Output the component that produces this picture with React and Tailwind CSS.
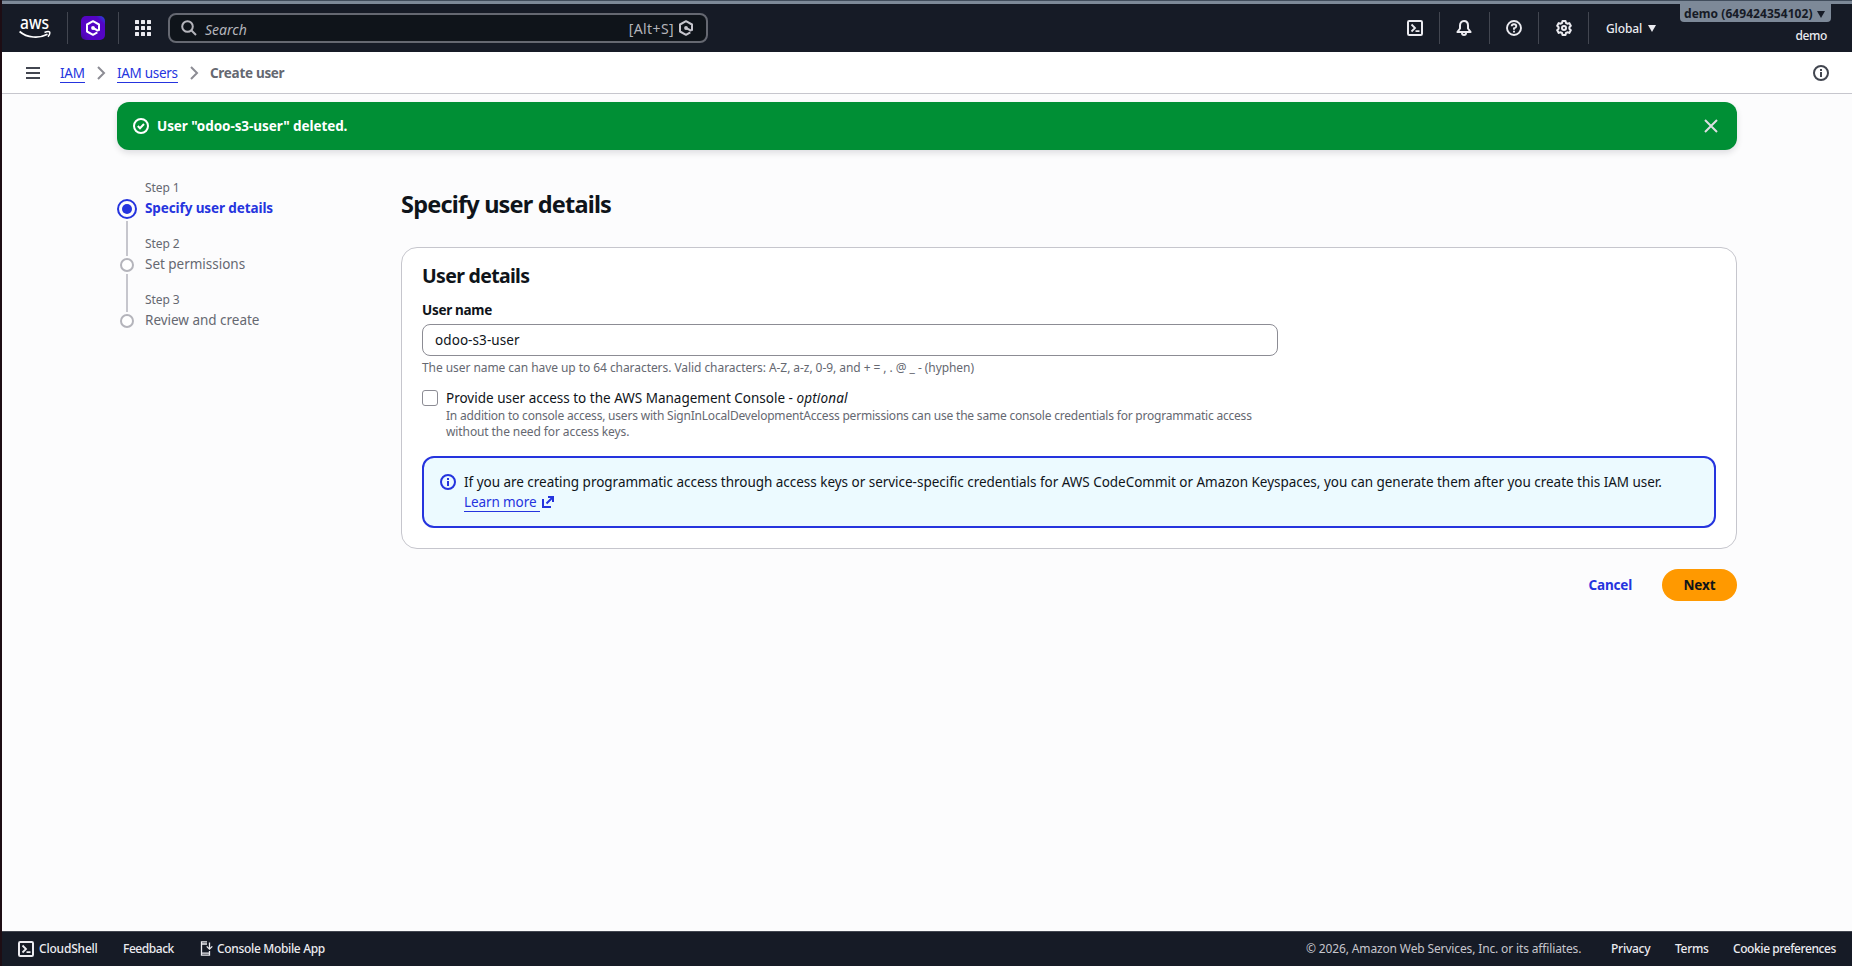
import React, { useState } from "react";

function CloudShellIcon() {
  return (
    <svg width="16" height="16" viewBox="0 0 16 16" fill="none" stroke="currentColor" strokeWidth="2" className="shrink-0">
      <rect x="1" y="1" width="14" height="14" rx="1.2" strokeLinejoin="round" />
      <path d="M4.5 4.5 8 8l-3.5 3.5M8.5 11.2h4" strokeWidth="1.8" />
    </svg>
  );
}

function BellIcon() {
  return (
    <svg width="16" height="16" viewBox="0 0 16 16" fill="none" stroke="currentColor" strokeWidth="2" strokeLinejoin="round">
      <path d="M8 1C5.4 1 4 3 4 5.5V8.5L1.4 12H14.6L12 8.5V5.5C12 3 10.6 1 8 1Z" />
      <path d="M6 13a2 2 0 0 0 4 0" />
    </svg>
  );
}

function HelpIcon() {
  return (
    <svg width="16" height="16" viewBox="0 0 16 16" fill="none" stroke="currentColor" strokeWidth="1.9">
      <circle cx="8" cy="8" r="7" />
      <path d="M5.7 6.3C5.7 5 6.7 4.2 8 4.2s2.3.8 2.3 2S9 8 8 8.3V9.8" />
      <path d="M8 10.8v1.8" />
    </svg>
  );
}

function GearIcon() {
  return (
    <svg width="16" height="16" viewBox="0 0 16 16" fill="none" stroke="currentColor" strokeWidth="2" strokeLinejoin="round">
      <path d="M6.5 1h3l.5 2 1.3.7 2-.6 1.5 2.6L13.4 7.2v1.6l1.4 1.5-1.5 2.6-2-.6L10 13l-.5 2h-3L6 13l-1.3-.7-2 .6-1.5-2.6 1.4-1.5V7.2L1.2 5.7l1.5-2.6 2 .6L6 3z" />
      <circle cx="8" cy="8" r="2" />
    </svg>
  );
}

function InfoIcon({ className = "" }) {
  return (
    <svg width="16" height="16" viewBox="0 0 16 16" fill="none" stroke="currentColor" strokeWidth="2" className={className}>
      <circle cx="8" cy="8" r="7" />
      <path d="M8 7v5M8 4v2" />
    </svg>
  );
}

function HexIcon({ className = "" }) {
  return (
    <svg width="16" height="16" viewBox="0 0 16 16" fill="none" stroke="currentColor" strokeWidth="2" className={className}>
      <path d="M14 10.8V4.5L8 1.2 2 4.5v7L8 14.8l4.3-2.4" strokeLinejoin="round" />
      <path d="M8 8l5.5 2.8" />
      <circle cx="8" cy="8" r="1.9" fill="currentColor" stroke="none" />
    </svg>
  );
}

function AwsLogo() {
  return (
    <svg width="32" height="42" viewBox="0 -11 32 42" className="shrink-0">
      <text x="1" y="11" fontFamily="Noto Sans" fontSize="18" fontWeight="500" fill="#fff" textLength="29" lengthAdjust="spacingAndGlyphs">
        aws
      </text>
      <path d="M0.6 13.5C8 20 20 20.8 28.5 16.3" fill="none" stroke="#fff" strokeWidth="1.7" />
      <path d="M25.5 14.5c2.5-1 4.5-1 5.2-.4.3 1-.4 3.2-1.7 4.6" fill="none" stroke="#fff" strokeWidth="1.5" />
    </svg>
  );
}

const Divider = () => <div className="h-8 w-px bg-[#424650]" />;

function Header() {
  return (
    <header className="flex h-12 items-center bg-[#161b26] text-[#ebebf0]">
      <div className="flex h-12 w-[65px] items-center pl-[17px]">
        <AwsLogo />
      </div>
      <Divider />
      <div className="flex w-[50px] justify-center">
        <div className="flex h-6 w-6 items-center justify-center rounded-[5px] bg-[linear-gradient(45deg,#3d0a8f_0%,#5603c4_20%,#5305c4_80%,#1d52e0_100%)] text-white">
          <HexIcon />
        </div>
      </div>
      <Divider />
      <div className="flex w-[49px] items-center pl-4">
        <svg width="16" height="16" viewBox="0 0 16 16" fill="currentColor">
          {[0, 6, 12].map((y) =>
            [0, 6, 12].map((x) => <rect key={`${x}-${y}`} x={x} y={y} width="4" height="4" rx="0.5" />)
          )}
        </svg>
      </div>
      <div className="flex h-[30px] w-[540px] items-center rounded-lg border-2 border-[#656871] bg-[#0f141a] pl-[11px] pr-3 text-[#b4b4bb]">
        <svg width="16" height="16" viewBox="0 0 16 16" fill="none" stroke="currentColor" strokeWidth="2">
          <circle cx="6.5" cy="6.5" r="5.3" />
          <path d="M10.5 10.5 15 15" />
        </svg>
        <span className="ml-2 pt-[2px] text-[14px] italic">Search</span>
        <span className="ml-auto mr-1 text-[14px] tracking-[0.4px]">[Alt+S]</span>
        <HexIcon className="text-[#c6c6cd]" />
      </div>

      <div className="ml-auto flex h-12 items-center">
        <div className="flex w-8"><CloudShellIcon /></div>
        <Divider />
        <div className="flex w-[49px] pl-4"><BellIcon /></div>
        <Divider />
        <div className="flex w-12 justify-center"><HelpIcon /></div>
        <Divider />
        <div className="flex w-[49px] justify-center"><GearIcon /></div>
        <Divider />
        <div className="flex w-[91px] items-center pl-[17px] text-[12px] font-medium">
          <span className="pt-px tracking-[-0.1px]">Global</span>
          <svg width="8" height="7" viewBox="0 0 8 7" fill="currentColor" className="ml-[6px]">
            <path d="M0 0h8L4 7z" />
          </svg>
        </div>
        <div className="flex h-12 w-[172px] flex-col items-end pr-[21px]">
          <div className="flex h-[18px] w-[151px] items-center rounded-b bg-[#7d8998] pl-1 pt-[2px] text-[12px] font-bold text-[#161b26]">
            <span className="whitespace-nowrap tracking-[0.05px]">demo (649424354102)</span>
            <svg width="8" height="7" viewBox="0 0 8 7" fill="currentColor" className="ml-1">
              <path d="M0 0h8L4 7z" />
            </svg>
          </div>
          <span className="mr-1 mt-[6px] text-[12px] font-medium leading-4 tracking-[-0.4px]">demo</span>
        </div>
      </div>
    </header>
  );
}

const Chevron = () => (
  <svg width="9" height="14" viewBox="0 0 9 14" fill="none" stroke="#8c8c94" strokeWidth="2">
    <path d="M1 1l6 6-6 6" />
  </svg>
);

function Breadcrumbs() {
  return (
    <nav className="flex h-[42px] items-center border-b border-[#c6c6cd] bg-white pl-6 pr-[23px] text-[13.5px]">
      <svg width="14" height="12" viewBox="0 0 14 12" stroke="#424650" strokeWidth="2">
        <path d="M0 1h14M0 6h14M0 11h14" />
      </svg>
      <a href="#" className="ml-5 mt-[2px] w-[25px] whitespace-nowrap border-b border-[#2534de] leading-[17px] tracking-[-0.25px] text-[#2534de]">IAM</a>
      <div className="ml-3 w-5"><Chevron /></div>
      <a href="#" className="mt-[2px] w-[61px] whitespace-nowrap border-b border-[#2534de] leading-[17px] tracking-[-0.3px] text-[#2534de]">IAM users</a>
      <div className="ml-3 w-5"><Chevron /></div>
      <span className="pt-px font-bold leading-5 tracking-[-0.3px] text-[#656871]">Create user</span>
      <InfoIcon className="ml-auto text-[#424650]" />
    </nav>
  );
}

const steps = [
  { label: "Step 1", title: "Specify user details", active: true },
  { label: "Step 2", title: "Set permissions" },
  { label: "Step 3", title: "Review and create" },
];

function Steps() {
  return (
    <ol className="w-[284px] pt-[30px]">
      {steps.map((step, i) => (
        <li key={step.label} className="flex h-14">
          <div className="flex w-5 flex-col items-center">
            {step.active ? (
              <div className="mt-[19px] flex h-5 w-5 shrink-0 items-center justify-center rounded-full border-2 border-[#2534de]">
                <div className="h-[10px] w-[10px] rounded-full bg-[#2534de]" />
              </div>
            ) : (
              <div className="mt-[22px] h-[14px] w-[14px] shrink-0 rounded-full border-2 border-[#b4b4bb] bg-white" />
            )}
            {i < steps.length - 1 && <div className="-mb-5 mt-[2px] w-[2px] flex-1 bg-[#c6c6cd]" />}
          </div>
          <div className="flex flex-col pl-2">
            <span className="text-[12px] leading-4 tracking-[-0.1px] text-[#656871]">{step.label}</span>
            <span
              className={`mt-[2px] text-[13.5px] leading-5 ${
                step.active ? "font-bold tracking-[-0.1px] text-[#2534de]" : "tracking-[-0.02px] text-[#656871]"
              }`}
            >
              {step.title}
            </span>
          </div>
        </li>
      ))}
    </ol>
  );
}

function UserDetails() {
  const [userName, setUserName] = useState("odoo-s3-user");

  return (
    <section className="h-[302px] rounded-2xl border border-[#c6c6cd] bg-white px-5 pt-4">
      <h2 className="text-[19.5px] font-bold leading-6 tracking-[-0.68px]">User details</h2>
      <label htmlFor="username" className="mt-3 block text-[13.5px] font-bold leading-5 tracking-[-0.3px]">
        User name
      </label>
      <input
        id="username"
        value={userName}
        onChange={(e) => setUserName(e.target.value)}
        className="mt-1 block h-8 w-[856px] rounded-lg border border-[#8c8c94] bg-white px-3 text-[13.5px] tracking-[0.08px] outline-none"
      />
      <p className="mt-1 text-[12px] leading-4 tracking-[-0.062px] text-[#656871]">
        The user name can have up to 64 characters. Valid characters: A-Z, a-z, 0-9, and + = , . @ _ - (hyphen)
      </p>

      {/* Console access */}
      <div className="mt-3 flex">
        <div className="mt-[2px] h-4 w-4 rounded-[3px] border border-[#8c8c94] bg-white" />
        <div className="pl-2">
          <p className="text-[13.5px] leading-5">
            Provide user access to the AWS Management Console - <i className="tracking-[0.15px]">optional</i>
          </p>
          <p className="text-[12px] leading-4 tracking-[-0.203px] text-[#656871]">
            In addition to console access, users with SignInLocalDevelopmentAccess permissions can use the same console credentials for programmatic access
            <br />
            <span className="tracking-[-0.1px]">without the need for access keys.</span>
          </p>
        </div>
      </div>

      <div className="mt-4 flex h-[72px] w-[1294px] rounded-xl border-2 border-[#2534de] bg-[#ecfaff] pl-4 pt-[14px]">
        <InfoIcon className="mt-[2px] text-[#2534de]" />
        <div className="pl-2 text-[13.5px] leading-5">
          <p className="whitespace-nowrap tracking-[-0.025px]">
            If you are creating programmatic access through access keys or service-specific credentials for AWS CodeCommit or Amazon Keyspaces, you can generate them after you create this IAM user.
          </p>
          <a href="#" className="flex text-[#2534de]">
            <span className="h-5 w-[76px] border-b border-[#2534de] tracking-[-0.1px]">Learn more</span>
            <svg width="12" height="12" viewBox="0 0 12 12" fill="none" stroke="currentColor" strokeWidth="2" className="ml-[2px] mt-[4px]">
              <path d="M1 3v8h8M6 1h5v5M11 1 4.5 7.5" />
            </svg>
          </a>
        </div>
      </div>
    </section>
  );
}

function Footer() {
  return (
    <footer className="flex h-[35px] items-center border-t border-[#424650] bg-[#161b26] pl-4 pr-[15px] text-[12px] font-medium text-[#ebebf0]">
      <CloudShellIcon />
      <span className="ml-[5px] w-[84px] tracking-[-0.2px]">CloudShell</span>
      <span className="w-[77px] tracking-[-0.45px]">Feedback</span>
      <svg width="13" height="15" viewBox="0 0 13 15" fill="none" stroke="currentColor" strokeWidth="1.3" className="mb-[2px] mr-1">
        <path d="M7 .8H1.500v13.400h8V10M1.500 3H7M1.500 12.200h8" />
        <path d="M9.500 1.500v6.500M6.700 5.400l2.800 2.800 2.800-2.800" />
      </svg>
      <span className="tracking-[-0.33px]">Console Mobile App</span>
      <span className="ml-auto w-[305px] font-normal tracking-[-0.14px] text-[#c6c6cd]">
        © 2026, Amazon Web Services, Inc. or its affiliates.
      </span>
      <span className="w-16 tracking-[-0.25px]">Privacy</span>
      <span className="w-[58px] tracking-[-0.3px]">Terms</span>
      <span className="w-[104px] whitespace-nowrap tracking-[-0.42px]">Cookie preferences</span>
    </footer>
  );
}

export default function App() {
  return (
    <div className="flex h-[966px] w-[1852px] flex-col overflow-hidden border-l-2 border-[#1d0d14] bg-[#fcfcfd] font-['Noto_Sans',sans-serif] text-[#0f141a]">
      <div className="h-1 shrink-0 border-t border-[#414d5c] bg-[#7d8998]" />
      <Header />
      <Breadcrumbs />
      <main className="w-[1735px] flex-1 pl-[115px] pt-2">
        <div className="flex h-12 items-center rounded-xl bg-[#008f35] pl-4 pr-[19px] text-white shadow-[0_3px_6px_rgba(0,7,22,0.12)]">
          <svg width="16" height="16" viewBox="0 0 16 16" fill="none" stroke="currentColor" strokeWidth="2">
            <circle cx="8" cy="8" r="7" />
            <path d="M4.8 8l2.2 2.3 4-4.3" />
          </svg>
          <span className="ml-2 text-[13.5px] font-bold leading-5 tracking-[-0.07px]">User "odoo-s3-user" deleted.</span>
          <svg width="14" height="14" viewBox="0 0 14 14" fill="none" stroke="#dedee3" strokeWidth="2" className="ml-auto">
            <path d="M1 1l12 12M13 1 1 13" />
          </svg>
        </div>
        <div className="flex">
          <Steps />
          <div className="flex-1 pt-[39px]">
            <h1 className="text-[23.5px] font-bold leading-[30px] tracking-[-0.81px]">Specify user details</h1>
            <div className="pt-7">
              <UserDetails />
            </div>
            <div className="mt-5 flex items-center justify-end text-[13.5px] font-bold leading-5">
              <button className="mr-[30px] tracking-[-0.2px] text-[#2534de]">Cancel</button>
              <button className="h-8 w-[75px] rounded-full bg-[#ff9900] tracking-[-0.1px]">Next</button>
            </div>
          </div>
        </div>
      </main>
      <Footer />
    </div>
  );
}
